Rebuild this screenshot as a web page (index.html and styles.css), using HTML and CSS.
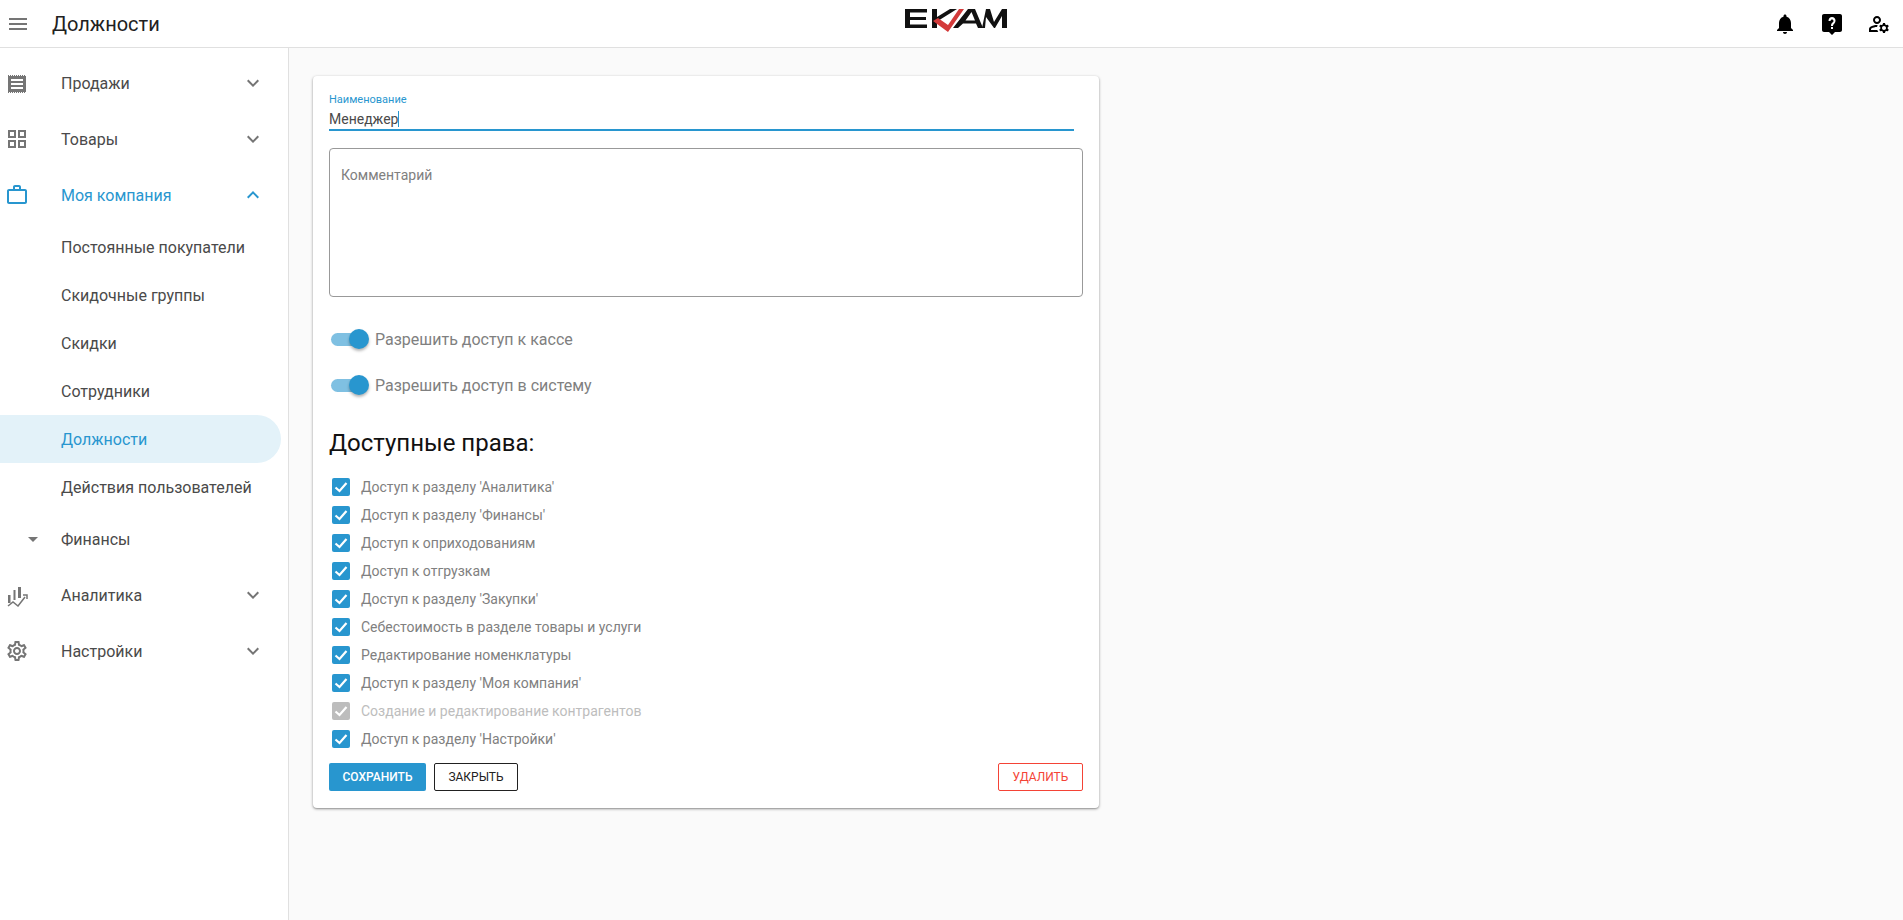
FILE: index.html
```html
<!DOCTYPE html>
<html lang="ru">
<head>
  <meta charset="UTF-8" />
  <meta name="viewport" content="width=device-width, initial-scale=1.0"/>
  <title>Должности</title>
  <link rel="stylesheet" href="styles.css">
</head>
<body>

  <header class="topbar">
    <div class="topbar-left">
      <svg class="icon menu-icon" viewBox="0 0 24 24"><path d="M3 18h18v-2H3v2zm0-5h18v-2H3v2zm0-7v2h18V6H3z"/></svg>
      <span class="page-title">Должности</span>
    </div>
    <svg class="logo" viewBox="0 0 102 24">
      <path d="M0 0h22v3.500H5V8h16v3H5v4.500h17V19H0z"/>
      <path d="M27 0h5v8L45 0h7L32 12.500V19h-5z"/>
      <path d="M48 19 63 0h7l8 19h-5l-2-4.500H58L53 19zM60.500 11.500H70L66.500 3z" fill-rule="evenodd"/>
      <path d="M77 19 81 0h4l4 13 8-13h5v19h-5V7l-7 12h-1L81 8l-1 11z"/>
      <path class="logo-check" d="M28 12 33 9 43 16 54 0h5L43 23z"/>
    </svg>
    <div class="topbar-right">
      <svg class="icon top-icon" viewBox="0 0 24 24"><path d="M12 22c1.100 0 2-.9 2-2h-4c0 1.100.89 2 2 2zm6-6v-5c0-3.070-1.640-5.640-4.500-6.320V4c0-.83-.67-1.500-1.500-1.500s-1.500.67-1.500 1.500v.68C7.630 5.360 6 7.920 6 11v5l-2 2v1h16v-1l-2-2z"/></svg>
      <svg class="icon top-icon" viewBox="0 0 24 24"><path d="M20 2H4c-1.100 0-2 .9-2 2v14c0 1.100.9 2 2 2h5l3 3 3-3h5c1.100 0 2-.9 2-2V4c0-1.100-.9-2-2-2zm-7 15h-2v-2h2v2zm1.400-5.500-.7.7c-.5.5-.7 1-.7 1.800h-2v-.5c0-1 .4-1.800 1-2.400l1.100-1.100c.3-.3.4-.6.4-1 0-.8-.7-1.500-1.500-1.500s-1.500.7-1.500 1.500H8.500C8.500 6.600 10 5 12 5s3.500 1.600 3.500 3.500c0 1.200-.5 2.200-1.100 3z"/></svg>
      <svg class="icon top-icon" viewBox="0 0 24 24"><path d="M4 18v-.65c0-.34.16-.66.41-.81C6.100 15.530 8.030 15 10 15c.03 0 .05 0 .08.01.1-.7.3-1.370.59-1.980C10.450 13.010 10.230 13 10 13c-2.420 0-4.680.67-6.610 1.820C2.510 15.340 2 16.320 2 17.350V20h9.260c-.42-.6-.75-1.280-.97-2H4zM10 12c2.210 0 4-1.790 4-4s-1.790-4-4-4C7.790 4 6 5.790 6 8s1.790 4 4 4zm0-6c1.100 0 2 .9 2 2s-.9 2-2 2-2-.9-2-2 .9-2 2-2zM20.750 16c0-.22-.03-.42-.06-.63l1.140-1.010-1-1.730-1.450.49c-.32-.27-.68-.48-1.080-.63L18 11h-2l-.3 1.490c-.4.15-.76.36-1.080.63l-1.450-.49-1 1.730 1.140 1.010c-.03.21-.06.41-.06.63s.03.42.06.63l-1.140 1.010 1 1.730 1.450-.49c.32.27.68.48 1.080.63L16 21h2l.3-1.490c.4-.15.76-.36 1.080-.63l1.450.49 1-1.730-1.140-1.010c.03-.21.06-.41.06-.63zM17 18c-1.100 0-2-.9-2-2s.9-2 2-2 2 .9 2 2-.9 2-2 2z"/></svg>
    </div>
  </header>

  <div class="layout">
    <nav class="sidebar">
      <div class="nav-item">
        <svg class="icon nav-icon" viewBox="0 0 24 24"><path d="M3 5h18v16H3z"/><path class="icon-dash" d="M3 4.500h18M3 21.500h18"/><path class="icon-cut" d="M6 8h12v2H6zM6 12h12v2H6zM6 16h12v2H6z"/></svg>
        <span class="nav-label">Продажи</span>
        <svg class="chevron" viewBox="0 0 24 24"><path d="M7.410 8.590 12 13.170l4.590-4.580L18 10l-6 6-6-6z"/></svg>
      </div>
      <div class="nav-item">
        <svg class="icon nav-icon" viewBox="0 0 24 24"><path d="M3 3h8v8H3zm2 2v4h4V5zM13 3h8v8h-8zm2 2v4h4V5zM3 13h8v8H3zm2 2v4h4v-4zM13 13h8v8h-8zm2 2v4h4v-4z" fill-rule="evenodd"/></svg>
        <span class="nav-label">Товары</span>
        <svg class="chevron" viewBox="0 0 24 24"><path d="M7.410 8.590 12 13.170l4.590-4.580L18 10l-6 6-6-6z"/></svg>
      </div>
      <div class="nav-item is-open">
        <svg class="icon nav-icon" viewBox="0 0 24 24"><path d="M14 6V4h-4v2h4zM4 8v11h16V8H4zm16-2c1.110 0 2 .89 2 2v11c0 1.110-.89 2-2 2H4c-1.110 0-2-.89-2-2l.01-11c0-1.110.88-2 1.990-2h4V4c0-1.110.89-2 2-2h4c1.110 0 2 .89 2 2v2h4z"/></svg>
        <span class="nav-label">Моя компания</span>
        <svg class="chevron" viewBox="0 0 24 24"><path d="M12 8l-6 6 1.410 1.410L12 10.830l4.590 4.580L18 14z"/></svg>
      </div>
      <div class="sub-item">Постоянные покупатели</div>
      <div class="sub-item">Скидочные группы</div>
      <div class="sub-item">Скидки</div>
      <div class="sub-item">Сотрудники</div>
      <div class="sub-item is-active">Должности</div>
      <div class="sub-item">Действия пользователей</div>
      <div class="nav-item nav-group">
        <svg class="icon nav-icon" viewBox="0 0 24 24"><path d="M7 10l5 5 5-5z"/></svg>
        <span class="nav-label">Финансы</span>
      </div>
      <div class="nav-item">
        <svg class="icon nav-icon" viewBox="0 0 24 24"><path d="M3 12h2.500v8H3zM8.500 7h2v10h-2zM13 4h3v11h-3z"/><path class="icon-line" d="M3 23l5-4 5 4 7-9M18 12h4v4"/></svg>
        <span class="nav-label">Аналитика</span>
        <svg class="chevron" viewBox="0 0 24 24"><path d="M7.410 8.590 12 13.170l4.590-4.580L18 10l-6 6-6-6z"/></svg>
      </div>
      <div class="nav-item">
        <svg class="icon nav-icon" viewBox="0 0 24 24"><path d="M19.430 12.980c.04-.32.07-.64.07-.98 0-.34-.03-.66-.07-.98l2.110-1.650c.19-.15.24-.42.12-.64l-2-3.460c-.09-.16-.26-.25-.44-.25-.06 0-.12.01-.17.03l-2.490 1c-.52-.4-1.080-.73-1.690-.98l-.38-2.650C14.460 2.180 14.250 2 14 2h-4c-.25 0-.46.18-.49.42l-.38 2.650c-.61.25-1.170.59-1.690.98l-2.490-1c-.06-.02-.12-.03-.18-.03-.17 0-.34.09-.43.25l-2 3.460c-.13.22-.07.49.12.64l2.110 1.650c-.04.32-.07.65-.07.98 0 .33.03.66.07.98l-2.110 1.650c-.19.15-.24.42-.12.64l2 3.460c.09.16.26.25.44.25.06 0 .12-.01.17-.03l2.490-1c.52.4 1.080.73 1.690.98l.38 2.650c.03.24.24.42.49.42h4c.25 0 .46-.18.49-.42l.38-2.650c.61-.25 1.170-.59 1.690-.98l2.490 1c.06.02.12.03.18.03.17 0 .34-.09.43-.25l2-3.460c.12-.22.07-.49-.12-.64l-2.110-1.650zm-1.980-1.710c.04.31.05.52.05.73 0 .21-.02.43-.05.73l-.14 1.130.89.7 1.080.84-.7 1.210-1.270-.51-1.040-.42-.9.68c-.43.32-.84.56-1.250.73l-1.060.43-.16 1.130-.2 1.350h-1.400l-.19-1.350-.16-1.130-1.060-.43c-.43-.18-.83-.41-1.230-.71l-.91-.7-1.060.43-1.270.51-.7-1.210 1.080-.84.89-.7-.14-1.130c-.03-.31-.05-.54-.05-.74s.02-.43.05-.73l.14-1.130-.89-.7-1.080-.84.7-1.210 1.270.51 1.040.42.9-.68c.43-.32.84-.56 1.250-.73l1.060-.43.16-1.130.2-1.350h1.390l.19 1.350.16 1.130 1.060.43c.43.18.83.41 1.230.71l.91.7 1.060-.43 1.270-.51.7 1.210-1.070.85-.89.7.14 1.130zM12 8c-2.210 0-4 1.790-4 4s1.790 4 4 4 4-1.790 4-4-1.790-4-4-4zm0 6c-1.100 0-2-.9-2-2s.9-2 2-2 2 .9 2 2-.9 2-2 2z"/></svg>
        <span class="nav-label">Настройки</span>
        <svg class="chevron" viewBox="0 0 24 24"><path d="M7.410 8.590 12 13.170l4.590-4.580L18 10l-6 6-6-6z"/></svg>
      </div>
    </nav>

    <main class="content">
      <section class="card">
        <div class="field">
          <div class="field-label">Наименование</div>
          <div class="field-value">Менеджер<span class="caret"></span></div>
        </div>

        <div class="comment">Комментарий</div>

        <div class="switches">
          <div class="switch-row">
            <span class="switch"><span class="switch-thumb"></span></span>
            <span class="switch-label">Разрешить доступ к кассе</span>
          </div>
          <div class="switch-row">
            <span class="switch"><span class="switch-thumb"></span></span>
            <span class="switch-label">Разрешить доступ в систему</span>
          </div>
        </div>

        <h2 class="rights-title">Доступные права:</h2>

        <ul class="rights">
          <li class="right"><svg class="checkbox" viewBox="0 0 18 18"><path d="M3.500 9.500 7.500 13 14.500 5"/></svg>Доступ к разделу 'Аналитика'</li>
          <li class="right"><svg class="checkbox" viewBox="0 0 18 18"><path d="M3.500 9.500 7.500 13 14.500 5"/></svg>Доступ к разделу 'Финансы'</li>
          <li class="right"><svg class="checkbox" viewBox="0 0 18 18"><path d="M3.500 9.500 7.500 13 14.500 5"/></svg>Доступ к оприходованиям</li>
          <li class="right"><svg class="checkbox" viewBox="0 0 18 18"><path d="M3.500 9.500 7.500 13 14.500 5"/></svg>Доступ к отгрузкам</li>
          <li class="right"><svg class="checkbox" viewBox="0 0 18 18"><path d="M3.500 9.500 7.500 13 14.500 5"/></svg>Доступ к разделу 'Закупки'</li>
          <li class="right"><svg class="checkbox" viewBox="0 0 18 18"><path d="M3.500 9.500 7.500 13 14.500 5"/></svg>Себестоимость в разделе товары и услуги</li>
          <li class="right"><svg class="checkbox" viewBox="0 0 18 18"><path d="M3.500 9.500 7.500 13 14.500 5"/></svg>Редактирование номенклатуры</li>
          <li class="right"><svg class="checkbox" viewBox="0 0 18 18"><path d="M3.500 9.500 7.500 13 14.500 5"/></svg>Доступ к разделу 'Моя компания'</li>
          <li class="right is-disabled"><svg class="checkbox" viewBox="0 0 18 18"><path d="M3.500 9.500 7.500 13 14.500 5"/></svg>Создание и редактирование контрагентов</li>
          <li class="right"><svg class="checkbox" viewBox="0 0 18 18"><path d="M3.500 9.500 7.500 13 14.500 5"/></svg>Доступ к разделу 'Настройки'</li>
        </ul>

        <div class="actions">
          <button class="btn btn-save">Сохранить</button>
          <button class="btn btn-close">Закрыть</button>
          <button class="btn btn-delete">Удалить</button>
        </div>
      </section>
    </main>
  </div>

</body>
</html>
```

FILE: styles.css
```css
* {
  box-sizing: border-box;
}

html, body {
  height: 100%;
}

body {
  margin: 0;
  display: flex;
  flex-direction: column;
  overflow: hidden;
  font-family: Roboto, "Liberation Sans", sans-serif;
  font-size: 14px;
  color: #4a4a4a;
  background: #fafafa;
}

.icon {
  display: block;
  width: 24px;
  height: 24px;
  flex: none;
  fill: currentColor;
}

/* Top bar */
.topbar {
  height: 48px;
  flex: none;
  display: grid;
  grid-template-columns: 1fr auto 1fr;
  align-items: center;
  padding: 0 12px 0 6px;
  background: #fff;
  border-bottom: 1px solid #e0e0e0;
}

.topbar-left {
  display: flex;
  align-items: center;
}

.menu-icon {
  color: #757575;
}

.page-title {
  margin-left: 22px;
  font-size: 20px;
  color: #212121;
}

.logo {
  width: 102px;
  height: 24px;
  align-self: start;
  margin: 9px 0 0 15px;
  fill: #111;
}

.logo-check {
  fill: #d33a3a;
}

.topbar-right {
  display: flex;
  justify-content: flex-end;
  gap: 23px;
  color: #000;
}

/* Sidebar */
.layout {
  flex: 1;
  display: flex;
  min-height: 0;
}

.sidebar {
  width: 289px;
  flex: none;
  padding-top: 7px;
  padding-right: 7px;
  background: #fff;
  border-right: 1px solid #e0e0e0;
}

.nav-item {
  height: 56px;
  display: flex;
  align-items: center;
  padding: 0 0 0 5px;
  font-size: 16px;
  color: #757575;
}

.nav-label {
  margin-left: 32px;
  color: #4a4a4a;
}

.icon-cut {
  fill: #fff;
}

.icon-dash {
  fill: none;
  stroke: currentColor;
  stroke-width: 1;
  stroke-dasharray: 1 1;
}

.icon-line {
  fill: none;
  stroke: currentColor;
  stroke-width: 1.500;
}

.chevron {
  width: 24px;
  height: 24px;
  margin-left: auto;
  margin-right: 16px;
  fill: #757575;
}

.nav-item.is-open,
.nav-item.is-open .nav-label,
.sub-item.is-active {
  color: #2896cf;
}

.nav-item.is-open .chevron {
  fill: #2896cf;
}

.nav-group .nav-icon {
  margin-left: 16px;
}

.nav-group .nav-label {
  margin-left: 16px;
}

.sub-item {
  height: 48px;
  display: flex;
  align-items: center;
  padding-left: 61px;
  font-size: 16px;
  color: #4a4a4a;
}

.sub-item.is-active {
  background: #e3f2f9;
  border-radius: 0 24px 24px 0;
}

/* Card */
.content {
  flex: 1;
  padding: 28px 24px;
}

.card {
  width: 786px;
  height: 732px;
  padding: 16px;
  background: #fff;
  border-radius: 4px;
  box-shadow: 0 1px 3px rgba(0, 0, 0, 0.4), 0 1px 1px rgba(0, 0, 0, 0.1);
}

.field {
  width: 745px;
  height: 39px;
  padding-top: 1px;
  border-bottom: 2px solid #2896cf;
}

.field-label {
  font-size: 11px;
  line-height: 13px;
  color: #2896cf;
}

.field-value {
  margin-top: 4px;
  font-size: 14px;
  line-height: 18px;
  color: #4a4a4a;
}

.caret {
  display: inline-block;
  width: 1px;
  height: 16px;
  vertical-align: -3px;
  background: #2896cf;
}

.comment {
  width: 754px;
  height: 149px;
  margin-top: 17px;
  padding: 17px 11px;
  font-size: 14px;
  line-height: 18px;
  color: #808080;
  border: 1px solid #999;
  border-radius: 4px;
}

.switches {
  margin-top: 19px;
}

.switch-row {
  height: 46px;
  display: flex;
  align-items: center;
  padding-left: 2px;
}

.switch {
  position: relative;
  width: 34px;
  height: 13px;
  background: #7fc0e2;
  border-radius: 7px;
}

.switch-thumb {
  position: absolute;
  top: -4px;
  right: -4px;
  width: 20px;
  height: 20px;
  background: #2896cf;
  border-radius: 50%;
  box-shadow: 0 2px 3px rgba(0, 0, 0, 0.3);
}

.switch-label {
  margin-left: 10px;
  font-size: 16px;
  color: #808080;
}

.rights-title {
  margin: 19px 0 0;
  font-size: 24px;
  line-height: 32px;
  font-weight: 400;
  color: #111;
}

.rights {
  margin: 14px 0 0;
  padding: 0;
  list-style: none;
}

.right {
  height: 28px;
  display: flex;
  align-items: center;
  padding-left: 3px;
  font-size: 14px;
  color: #808080;
}

.checkbox {
  width: 18px;
  height: 18px;
  margin-right: 11px;
  background: #2896cf;
  border-radius: 2px;
  fill: none;
  stroke: #fff;
  stroke-width: 2.200;
}

.is-disabled {
  color: #bdbdbd;
}

.is-disabled .checkbox {
  background: #bdbdbd;
}

.actions {
  display: flex;
  gap: 8px;
  margin-top: 10px;
}

.btn {
  height: 28px;
  padding: 0;
  font-family: inherit;
  font-size: 12px;
  font-weight: 500;
  text-transform: uppercase;
  border-radius: 2px;
  background: #fff;
}

.btn-save {
  width: 97px;
  color: #fff;
  background: #2896cf;
  border: 0;
}

.btn-close {
  width: 84px;
  font-weight: 400;
  color: #212121;
  border: 1px solid #212121;
}

.btn-delete {
  width: 85px;
  margin-left: auto;
  font-weight: 400;
  color: #f44336;
  border: 1px solid #f44336;
}
```
